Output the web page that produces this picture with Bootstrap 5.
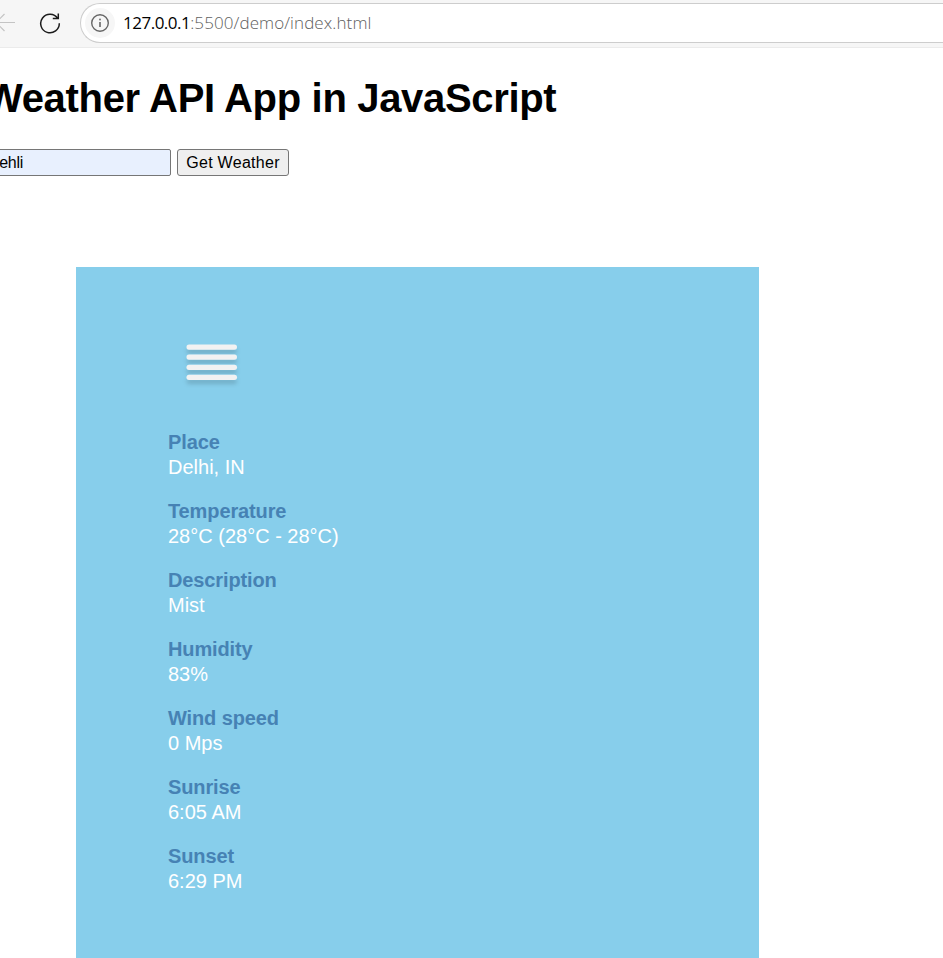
<!DOCTYPE html>
<html lang="en">
<head>
<meta charset="utf-8">
<meta name="viewport" content="width=device-width, initial-scale=1">
<title>Weather API App in JavaScript</title>
<link rel="stylesheet" href="https://cdn.jsdelivr.net/npm/bootstrap@5.3.0/dist/css/bootstrap.min.css">
<style>
body{font-family:"Liberation Sans",Arial,sans-serif;color:#000;background:#fff;height:958px;overflow:hidden}
.toolbar{height:48px;background:#f6f6f6;border-bottom:1px solid #ebebeb;padding-top:3px}
.back-icon{width:15px;margin-right:24px}
.reload-icon{margin-right:19px}
.address{height:40px;border:1px solid #cdcdcd;border-right:0;border-radius:20px 0 0 20px;background:#fff;padding-left:4px}
.info-dot{width:30px;height:30px;background:#f6f6f6}
.url{font:300 17px "Open Sans","Noto Sans",sans-serif;color:#606060;margin-left:8px;letter-spacing:.09px;line-height:38px}
.url b{font-weight:400;color:#000;letter-spacing:-.5px}
.title{font-size:40px;font-weight:700;line-height:46px;margin:27px 0 28px -15px;letter-spacing:-.33px}
.city{width:191px;height:27px;margin-left:-20px;padding:0 3px 0 7px;border:1px solid #767676;border-radius:2px;background:#e8f0fe;font-size:16px;line-height:24px;color:#000;letter-spacing:-.3px}
.get-btn{width:112px;height:27px;margin-left:6px;padding:0;border:1px solid #767676;border-radius:3px;background:#efefef;font-size:16px;line-height:24px;color:#000;letter-spacing:.28px}
.weather{width:683px;height:691px;margin:91px 0 0 76px;padding:66px 92px 0;background:#87ceeb;font-size:20px;line-height:25px}
.mist{margin:0 0 37px 8px}
.weather dt{color:#4682b4;letter-spacing:-.12px}
.weather dd{color:#fff;margin-bottom:19px}
</style>
<script src="https://cdn.jsdelivr.net/npm/bootstrap@5.3.0/dist/js/bootstrap.bundle.min.js"></script>
</head>
<body>
<header class="toolbar d-flex align-items-start">
<svg class="back-icon flex-shrink-0 mt-2" height="22" viewBox="0 0 15 22" fill="none" stroke="#c4c4c4" stroke-width="1.2"><path d="M15 11.5H-2M4.500 3L-4 11.500L4.500 20"/></svg>
<svg class="reload-icon flex-shrink-0 mt-2" width="22" height="24" viewBox="0 0 22 24" fill="none" stroke="#1b1b1b" stroke-width="1.5"><path d="M18.700 7.300A9.300 9.300 0 1 0 20.300 12.300M19.300 2.500V7.500H13.800"/></svg>
<div class="address flex-grow-1 d-flex align-items-center">
<span class="info-dot rounded-circle d-flex align-items-center justify-content-center"><svg width="20" height="20" viewBox="0 0 20 20" fill="none" stroke="#666" stroke-width="1.4"><circle cx="10" cy="10" r="8.300"/><path d="M10 9V14" stroke-width="1.600"/><circle cx="10" cy="6.500" r=".9" fill="#666" stroke="none"/></svg></span>
<span class="url text-nowrap"><b>127.0.0.1</b>:5500/demo/index.html</span>
</div>
</header>
<main>
<h1 class="title text-nowrap">Weather API App in JavaScript</h1>
<div class="d-flex">
<input class="city" type="text" value="Dehli" aria-label="City">
<button class="get-btn" type="button">Get Weather</button>
</div>
<section class="weather">
<svg class="mist d-block" width="70" height="60" viewBox="0 0 70 60">
<defs><filter id="shade" x="-20%" y="-20%" width="140%" height="160%"><feDropShadow dx="0" dy="4" stdDeviation="2.200" flood-color="#000" flood-opacity=".16"/></filter></defs>
<g fill="#f2f2f2" filter="url(#shade)"><rect x="10.500" y="11.500" width="50.500" height="5.200" rx="2.600"/><rect x="10.500" y="21.500" width="50.500" height="5.200" rx="2.600"/><rect x="10.500" y="31.700" width="50.500" height="5.200" rx="2.600"/><rect x="10.500" y="41.700" width="50.500" height="5.200" rx="2.600"/></g>
</svg>
<dl class="mb-0">
<dt>Place</dt><dd>Delhi, IN</dd>
<dt>Temperature</dt><dd>28°C (28°C - 28°C)</dd>
<dt>Description</dt><dd>Mist</dd>
<dt>Humidity</dt><dd>83%</dd>
<dt>Wind speed</dt><dd>0 Mps</dd>
<dt>Sunrise</dt><dd>6:05 AM</dd>
<dt>Sunset</dt><dd>6:29 PM</dd>
</dl>
</section>
</main>
</body>
</html>
